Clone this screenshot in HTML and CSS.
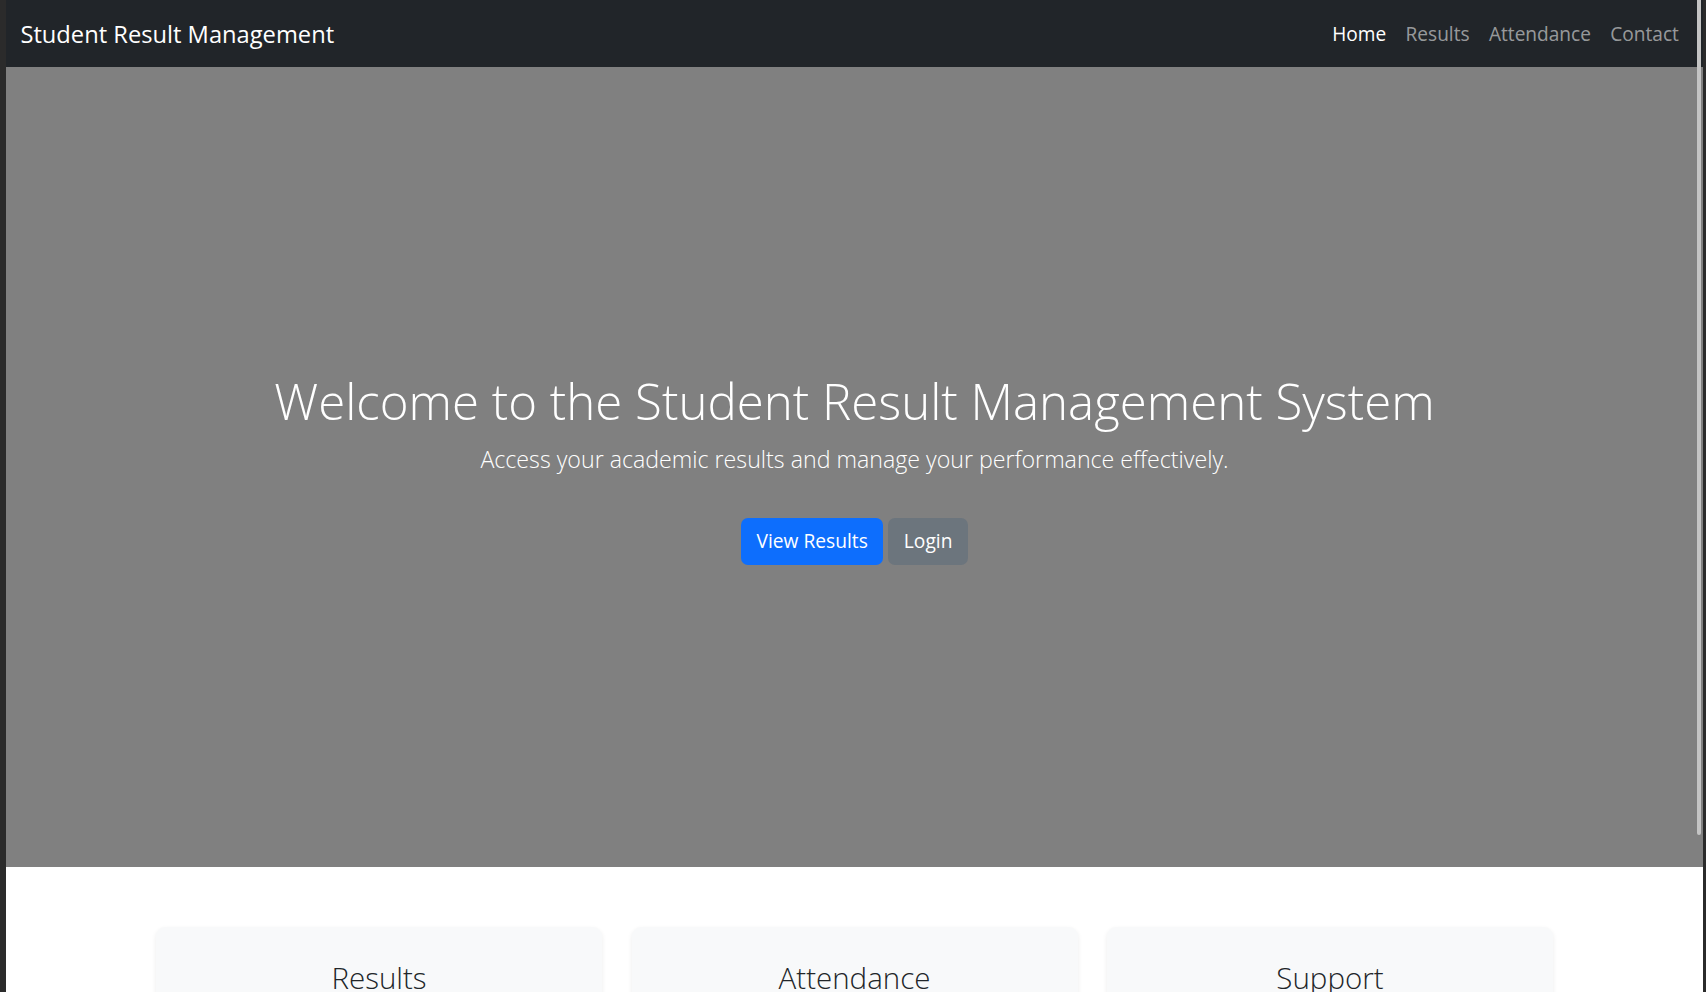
FILE: index.html
```html
<!DOCTYPE html>
<html lang="en">
<head>
<meta charset="utf-8">
<title>Student Result Management</title>
<link rel="stylesheet" href="styles.css">
</head>
<body>
<div class="window">
  <div class="page">
    <nav class="navbar">
      <a class="brand" href="#">Student Result Management</a>
      <ul class="nav">
        <li><a class="nav-link active" href="#">Home</a></li>
        <li><a class="nav-link" href="#">Results</a></li>
        <li><a class="nav-link" href="#">Attendance</a></li>
        <li><a class="nav-link" href="#">Contact</a></li>
      </ul>
    </nav>
    <section class="hero">
      <div class="hero-inner">
        <h1 class="hero-title">Welcome to the Student Result Management System</h1>
        <p class="lead">Access your academic results and manage your performance effectively.</p>
        <div class="actions">
          <a class="btn btn-primary" href="#">View Results</a>
          <a class="btn btn-secondary" href="#">Login</a>
        </div>
      </div>
    </section>
    <section class="features">
      <div class="cards">
        <div class="card">
          <h3 class="card-title">Results</h3>
          <p class="card-text">Check your semester results and grades.</p>
        </div>
        <div class="card">
          <h3 class="card-title">Attendance</h3>
          <p class="card-text">Track your attendance record for each course.</p>
        </div>
        <div class="card">
          <h3 class="card-title">Support</h3>
          <p class="card-text">Get help from the administration team.</p>
        </div>
      </div>
    </section>
  </div>
  <div class="scroll-thumb"></div>
</div>
</body>
</html>
```
FILE: styles.css
```css
* { box-sizing: border-box; }
html, body { margin: 0; padding: 0; }
body {
  background: #2b2b2b;
  font-family: "Open Sans", "Noto Sans", sans-serif;
  overflow: hidden;
}
.window {
  position: relative;
  height: 992px;
  padding-left: 6px;
  overflow: hidden;
}
.page {
  width: 1697px;
  height: 992px;
  background: #fff;
  overflow: hidden;
}
.navbar {
  height: 67px;
  background: #212529;
  display: flex;
  align-items: center;
  justify-content: space-between;
  padding: 2px 14.4px 0;
}
.brand {
  color: #fff;
  text-decoration: none;
  font-size: 23.7px;
  line-height: 1.5;
}
.nav {
  list-style: none;
  margin: 0;
  padding: 0;
  display: flex;
}
.nav-link {
  display: block;
  padding: 0 9.7px;
  font-size: 19.1px;
  line-height: 1.5;
  color: rgba(255, 255, 255, 0.55);
  text-decoration: none;
}
.nav-link.active { color: #fff; }
.hero {
  height: 800px;
  background: #808080;
  color: #fff;
  display: flex;
  align-items: center;
  justify-content: center;
  padding-top: 2px;
  text-align: center;
}
.hero-title {
  margin: 0 0 12px;
  font-size: 49.2px;
  font-weight: 300;
  line-height: 1.2;
}
.lead {
  margin: 0 0 41px;
  font-size: 23.2px;
  font-weight: 300;
  line-height: 1.5;
}
.actions {
  display: flex;
  justify-content: center;
  gap: 5px;
}
.btn {
  display: inline-flex;
  align-items: center;
  height: 47px;
  padding: 0 15.5px;
  border-radius: 7px;
  font-size: 19.2px;
  line-height: 1.5;
  color: #fff;
  text-decoration: none;
}
.btn-primary { background: #0d6efd; }
.btn-secondary { background: #6c757d; }
.features {
  padding-top: 60px;
}
.cards {
  width: 1397px;
  margin: 0 auto;
  display: grid;
  grid-template-columns: repeat(3, 1fr);
  gap: 29.5px;
}
.card {
  background: #f8f9fa;
  border-radius: 9px;
  box-shadow: 0 2px 5px rgba(0, 0, 0, 0.075);
  padding: 33px 24px 24px;
  text-align: center;
  height: 240px;
}
.card-title {
  margin: 0 0 10px;
  font-size: 29.5px;
  font-weight: 300;
  line-height: 1.2;
  color: #212529;
}
.card-text {
  margin: 0;
  font-size: 19.2px;
  color: #212529;
}
.scroll-thumb {
  position: absolute;
  left: 1697px;
  top: 0;
  width: 4px;
  height: 835px;
  background: #c4c4c4;
  border-radius: 0 0 2px 2px;
}
```
